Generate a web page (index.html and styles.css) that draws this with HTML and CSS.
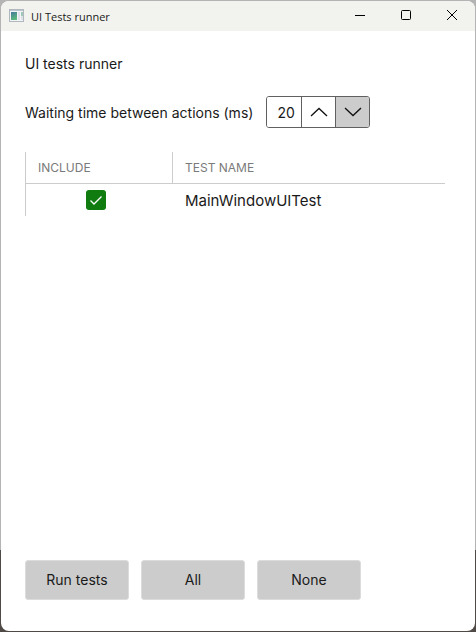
FILE: index.html
```html
<!DOCTYPE html>
<html lang="en">
<head>
<meta charset="utf-8">
<title>UI Tests runner</title>
<link rel="stylesheet" href="styles.css">
</head>
<body>
<div class="window">
  <header class="titlebar">
    <svg class="app-icon" width="16" height="14" viewBox="0 0 16 14" aria-hidden="true">
      <defs><linearGradient id="pane" x1="0" y1="0" x2="0.4" y2="1"><stop offset="0" stop-color="#44789f"/><stop offset="1" stop-color="#5cb87c"/></linearGradient></defs>
      <rect x="0.5" y="0.5" width="14" height="12" fill="#f3f4f6" stroke="#b0b7bd"/>
      <rect x="1" y="1" width="13" height="1" fill="#bcc6d2"/>
      <rect x="2" y="3" width="6" height="8" fill="url(#pane)"/>
      <rect x="9" y="3" width="2" height="8" fill="#dfe2ea"/>
      <rect x="12" y="3" width="2" height="4" fill="#a3c6bb"/>
      <rect x="12" y="7" width="2" height="4" fill="#dde2e8"/>
    </svg>
    <span class="caption">UI Tests runner</span>
    <button class="window-button" type="button" aria-label="Minimize"><svg width="12" height="12" viewBox="0 0 12 12"><path d="M1 6.500h10"/></svg></button>
    <button class="window-button" type="button" aria-label="Maximize"><svg width="12" height="12" viewBox="0 0 12 12"><rect x="1.500" y="1.500" width="9" height="9" rx="1"/></svg></button>
    <button class="window-button" type="button" aria-label="Close"><svg width="12" height="12" viewBox="0 0 12 12"><path d="M1 1l10 10M11 1L1 11"/></svg></button>
  </header>
  <main class="content">
    <h1 class="heading">UI tests runner</h1>
    <div class="setting">
      <label for="delay">Waiting time between actions (ms)</label>
      <div class="spinner">
        <input id="delay" type="text" inputmode="numeric" value="20">
        <button type="button" aria-label="Increase"><svg width="18" height="10" viewBox="0 0 18 10"><path d="M1 9l8-7.500l8 7.500"/></svg></button>
        <button class="pressed" type="button" aria-label="Decrease"><svg width="18" height="10" viewBox="0 0 18 10"><path d="M1 1l8 7.500l8-7.500"/></svg></button>
      </div>
    </div>
    <table class="tests">
      <thead>
        <tr><th class="include" scope="col">INCLUDE</th><th scope="col">TEST NAME</th></tr>
      </thead>
      <tbody>
        <tr>
          <td class="include"><label class="check"><input type="checkbox" checked aria-label="Include MainWindowUITest"><svg width="20" height="20" viewBox="0 0 20 20" aria-hidden="true"><path d="M4.500 10.500l3.500 3.500l7.500-7.500"/></svg></label></td>
          <td>MainWindowUITest</td>
        </tr>
      </tbody>
    </table>
    <div class="actions">
      <button type="button">Run tests</button>
      <button type="button">All</button>
      <button type="button">None</button>
    </div>
  </main>
</div>
</body>
</html>
```
FILE: styles.css
```css
* {
  box-sizing: border-box;
}

body {
  display: flex;
  min-height: 100vh;
  margin: 0;
  padding: 1px;
  background: linear-gradient(#b4b4b4 87%, #4f4a46 87%);
  font-family: Inter, "Liberation Sans", sans-serif;
  font-size: 14px;
  color: #1a1a1a;
}

button,
input {
  margin: 0;
  border: 0;
  padding: 0;
  font: inherit;
  color: inherit;
}

svg {
  display: block;
  fill: none;
  stroke-width: 1;
}

.window {
  display: flex;
  flex: 1;
  flex-direction: column;
  overflow: hidden;
  border-radius: 8px;
  background: #fff;
}

.titlebar {
  display: flex;
  align-items: center;
  height: 30px;
  padding-left: 8px;
  background: #f2f3ee;
}

.caption {
  flex: 1;
  margin-left: 6px;
  font-family: "Open Sans", "Noto Sans", sans-serif;
  font-size: 11px;
}

.window-button {
  display: grid;
  place-items: center;
  align-self: flex-start;
  width: 46px;
  height: 28px;
  background: none;
}

.window-button svg {
  stroke: #000;
}

.content {
  display: flex;
  flex: 1;
  flex-direction: column;
  padding: 24px 30px 31px 24px;
}

.heading {
  margin: 0;
  font-size: 14px;
  font-weight: 400;
  line-height: 18px;
}

.setting {
  display: flex;
  align-items: center;
  gap: 13px;
  margin: 23px 0 24px;
}

.spinner {
  display: flex;
  overflow: hidden;
  height: 32px;
  border: 1px solid #606060;
  border-radius: 3px;
}

.spinner input {
  width: 34px;
  padding-left: 10px;
}

.spinner button {
  display: grid;
  place-items: center;
  width: 34px;
  border-left: 1px solid #606060;
  background: #fff;
}

.spinner .pressed {
  background: #ccc;
}

.spinner svg {
  stroke: #111;
  stroke-width: 1.300;
}

.tests {
  width: 100%;
  border-collapse: separate;
  border-spacing: 0;
  border-left: 1px solid #ccc;
  table-layout: fixed;
}

.tests th,
.tests td {
  height: 32px;
  padding: 0 12px;
  text-align: left;
}

.tests th {
  border-bottom: 1px solid #ccc;
  font-size: 12px;
  font-weight: 400;
  color: #7a7a7a;
}

.tests .include {
  width: 147px;
}

.tests th.include {
  border-right: 1px solid #ccc;
}

.tests td {
  font-size: 15px;
}

.check {
  display: grid;
  width: 20px;
  margin: 0 auto;
}

.tests td.include {
  padding: 0 19px 0 12px;
}

.check > * {
  grid-area: 1 / 1;
}

.check input {
  width: 20px;
  height: 20px;
  border-radius: 3px;
  background: #107c10;
  appearance: none;
}

.check svg {
  pointer-events: none;
  stroke: #fff;
  stroke-width: 1.300;
}

.actions {
  display: flex;
  gap: 12px;
  margin-top: auto;
}

.actions button {
  width: 104px;
  height: 40px;
  padding-bottom: 2px;
  border: 1px solid #dcdcdc;
  border-radius: 3px;
  background: #ccc;
}
```
